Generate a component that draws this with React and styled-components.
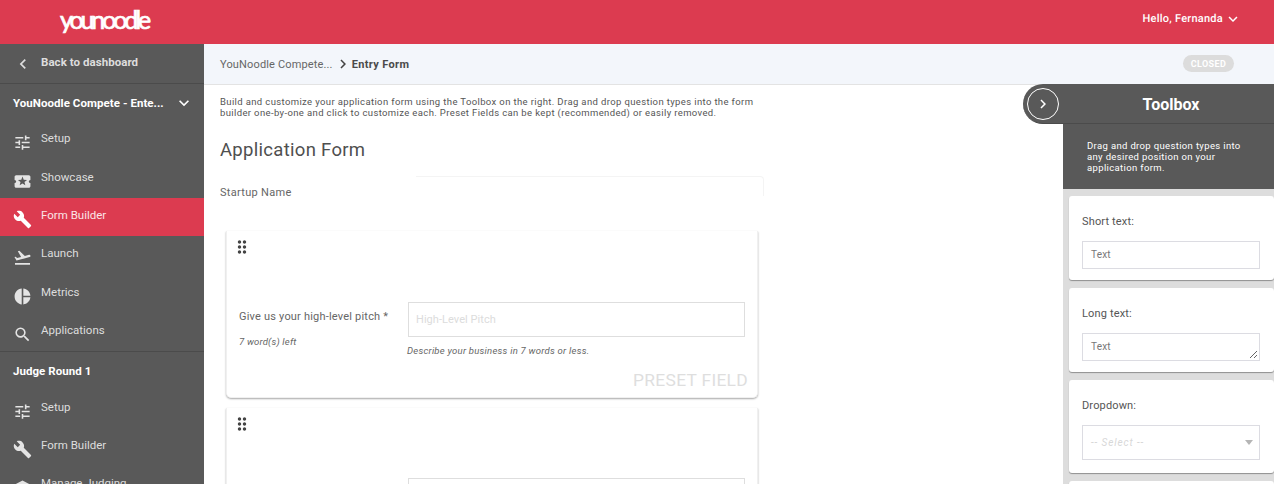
import React from "react";
import styled, { createGlobalStyle } from "styled-components";
import {
  MdBuild,
  MdChevronLeft,
  MdChevronRight,
  MdDragIndicator,
  MdExpandMore,
  MdFlightTakeoff,
  MdLocalPlay,
  MdPieChart,
  MdSchool,
  MdSearch,
  MdTune,
} from "react-icons/md";

const GlobalStyle = createGlobalStyle`
  html, body {
    margin: 0;
    height: 484px;
    overflow: hidden;
    background: #fff;
    font-family: Roboto, "Liberation Sans", sans-serif;
    color: #555;
  }
  * { box-sizing: border-box; }
`;

const Page = styled.div`
  width: 1274px;
  height: 484px;
  display: flex;
  flex-direction: column;
  overflow: hidden;
`;

const Header = styled.header`
  height: 44px;
  flex: none;
  background: #dc3b50;
  display: flex;
  align-items: center;
  justify-content: space-between;
  padding: 0 32px 0 60px;
  color: #fff;
`;

const Logo = styled.div`
  font-family: Lato, sans-serif;
  font-size: 25px;
  font-weight: 400;
  letter-spacing: -3.1px;
  line-height: 30px;
  margin-top: -7px;
  -webkit-text-stroke: 0.7px #fff;
`;

const Account = styled.div`
  display: flex;
  align-items: center;
  gap: 1px;
  margin-top: -7px;
  font-size: 11px;
  font-weight: 500;
  letter-spacing: 0.25px;
  text-rendering: geometricPrecision;
  svg { font-size: 18px; }
`;

const Body = styled.div`
  flex: 1;
  display: flex;
  min-height: 0;
`;

const Sidebar = styled.nav`
  width: 204px;
  flex: none;
  background: #595959;
  color: #ddd;
  overflow: hidden;
`;

const BackRow = styled.div`
  height: 40px;
  display: flex;
  align-items: center;
  padding: 0 0 3px 13px;
  border-bottom: 1px solid #4b4b4b;
  font-size: 11.5px;
  font-weight: 700;
  letter-spacing: 0.05px;
  svg { font-size: 20px; margin-right: 8px; margin-top: 3px; }
`;

const SectionRow = styled.div`
  height: 37px;
  display: flex;
  align-items: center;
  justify-content: space-between;
  padding: 0 10px 0 13px;
  color: #fff;
  font-size: 11.5px;
  font-weight: 700;
  letter-spacing: 0.05px;
  white-space: nowrap;
  svg { font-size: 20px; }
`;

const NavGroup = styled.div`
  border-bottom: ${(p) => (p.$divided ? "1px solid #4b4b4b" : "none")};
`;

const NavRow = styled.div`
  height: 38.4px;
  display: flex;
  align-items: center;
  padding-left: 13px;
  font-size: 11.5px;
  background: ${(p) => (p.$active ? "#dc3b50" : "transparent")};
  color: ${(p) => (p.$active ? "#fbe4e7" : "#ddd")};
  svg {
    font-size: 19px;
    width: 19px;
    margin-right: 9px;
    margin-top: 5px;
    color: ${(p) => (p.$active ? "#fff" : "#e4e4e4")};
    flex: none;
  }
  span { margin-top: -4px; }
`;

const Main = styled.main`
  flex: 1;
  min-width: 0;
  display: flex;
  flex-direction: column;
`;

const Breadcrumb = styled.div`
  height: 41px;
  flex: none;
  background: #f3f6fb;
  border-bottom: 1px solid #e3e3e3;
  display: flex;
  align-items: center;
  padding: 0 40px 0 16px;
  font-size: 11px;
  letter-spacing: 0.15px;
  color: #666;
  svg { font-size: 18px; color: #444; margin-left: 1px; }
`;

const Crumb = styled.b`
  font-weight: 700;
  color: #4a4a4a;
  letter-spacing: 0.35px;
`;

const Status = styled.span`
  margin-left: auto;
  margin-top: -1px;
  width: 51px;
  height: 17px;
  border-radius: 9px;
  background: #dcdcdc;
  color: #fff;
  font-size: 9px;
  font-weight: 700;
  letter-spacing: 0.4px;
  display: flex;
  align-items: center;
  justify-content: center;
`;

const Workspace = styled.div`
  flex: 1;
  min-height: 0;
  display: flex;
`;

const FormArea = styled.section`
  flex: 1;
  min-width: 0;
  padding: 11px 0 0 16px;
  overflow: hidden;
`;

const Intro = styled.p`
  width: 540px;
  margin: 0;
  font-size: 9.5px;
  line-height: 11px;
  letter-spacing: 0.37px;
  color: #555;
`;

const Title = styled.h1`
  margin: 19px 0 0;
  font-size: 18.5px;
  line-height: 26px;
  font-weight: 400;
  letter-spacing: 0.3px;
  color: #4f4f4f;
`;

const StartupRow = styled.div`
  display: flex;
  width: 544px;
  height: 55px;
  margin-top: 13px;
`;

const StartupLabel = styled.label`
  width: 196px;
  flex: none;
  padding-top: 10px;
  font-size: 11px;
  letter-spacing: 0.3px;
  color: #666;
`;

const StartupField = styled.div`
  flex: 1;
  height: 20px;
  border-top: 1px solid #f4f4f4;
  border-right: 1px solid #f4f4f4;
  border-radius: 0 4px 0 0;
`;

const FieldCard = styled.article`
  width: 532px;
  margin-left: 6px;
  height: ${(p) => (p.$height ? `${p.$height}px` : "auto")};
  margin-bottom: 10px;
  padding: 6px 12px 0 12px;
  background: #fff;
  border: 1px solid #f0f0f0;
  border-top: none;
  border-radius: 0 0 5px 5px;
  box-shadow: 0 1px 2px rgba(0, 0, 0, 0.35);
`;

const Handle = styled.div`
  height: 20px;
  margin-left: -7px;
  color: #444;
  svg { font-size: 20px; display: block; }
`;

const FieldRow = styled.div`
  display: flex;
  margin-top: ${(p) => p.$gap}px;
`;

const FieldLabel = styled.div`
  width: 169px;
  flex: none;
  padding-top: 8px;
  font-size: 11px;
  letter-spacing: 0.2px;
  color: #666;
`;

const WordsLeft = styled.div`
  margin-top: 13px;
  font-size: 9.5px;
  font-style: italic;
  letter-spacing: 0.2px;
  color: #666;
`;

const FieldControl = styled.div`
  flex: 1;
`;

const PitchInput = styled.div`
  height: 35px;
  border: 1px solid #dedede;
  display: flex;
  align-items: center;
  padding-left: 7px;
  font-size: 11px;
  letter-spacing: 0.05px;
  color: #dcdcdc;
`;

const Hint = styled.div`
  margin-top: 8px;
  margin-left: -1px;
  font-size: 9.5px;
  font-style: italic;
  letter-spacing: 0.25px;
  color: #666;
`;

const Preset = styled.div`
  margin-top: 14px;
  margin-right: -3px;
  text-align: right;
  font-size: 17.4px;
  line-height: 20px;
  letter-spacing: 0.3px;
  color: #dedede;
`;

const Toolbox = styled.aside`
  width: 211px;
  flex: none;
  display: flex;
  flex-direction: column;
  margin-top: -1px;
`;

const ToolboxHeader = styled.div`
  height: 40px;
  flex: none;
  margin-left: -40px;
  padding-left: 4px;
  border-radius: 20px 0 0 20px;
  border-bottom: 1px solid #4b4b4b;
  background: #595959;
  color: #fff;
  display: flex;
  align-items: center;
`;

const ToggleButton = styled.div`
  width: 32px;
  height: 32px;
  flex: none;
  border: 1px solid #fff;
  border-radius: 50%;
  display: flex;
  align-items: center;
  justify-content: center;
  svg { font-size: 18px; }
`;

const ToolboxTitle = styled.h2`
  flex: 1;
  margin: 0;
  padding: 1px 0 0 9px;
  text-align: center;
  font-size: 16px;
  font-weight: 700;
`;

const ToolboxIntro = styled.p`
  height: 65px;
  flex: none;
  margin: 0;
  padding: 16px 24px 0;
  background: #595959;
  color: #fff;
  font-size: 9.5px;
  line-height: 11px;
  letter-spacing: 0.35px;
`;

const ToolList = styled.div`
  flex: 1;
  background: #dddddd;
  padding: 7px 0 0 6px;
  display: flex;
  flex-direction: column;
  gap: 8px;
  overflow: hidden;
`;

const ToolCard = styled.div`
  flex: none;
  min-height: ${(p) => p.$height}px;
  padding: 19px 14px 0 13px;
  background: #fff;
  border-radius: 3px;
  box-shadow: 0 1px 1px rgba(0, 0, 0, 0.35);
`;

const ToolLabel = styled.div`
  font-size: 11px;
  line-height: 14px;
  letter-spacing: 0.15px;
  color: #555;
`;

const ToolInput = styled.div`
  position: relative;
  height: ${(p) => p.$height}px;
  margin-top: 12px;
  border: 1px solid #dcdce2;
  display: flex;
  align-items: center;
  padding: 0 0 1px 8px;
  font-size: 10px;
  letter-spacing: ${(p) => (p.$muted ? "0.9px" : "0.2px")};
  color: ${(p) => (p.$muted ? "#d8d8d8" : "#777")};
  font-style: ${(p) => (p.$muted ? "italic" : "normal")};
`;

const Grip = styled.svg`
  position: absolute;
  right: 1px;
  bottom: 1px;
`;

const Caret = styled.span`
  position: absolute;
  right: 6px;
  top: 14px;
  border-left: 4px solid transparent;
  border-right: 4px solid transparent;
  border-top: 5px solid #b5b5b5;
`;

const mainNav = [
  { label: "Setup", Icon: MdTune },
  { label: "Showcase", Icon: MdLocalPlay },
  { label: "Form Builder", Icon: MdBuild, active: true },
  { label: "Launch", Icon: MdFlightTakeoff },
  { label: "Metrics", Icon: MdPieChart },
  { label: "Applications", Icon: MdSearch },
];

const judgeNav = [
  { label: "Setup", Icon: MdTune },
  { label: "Form Builder", Icon: MdBuild },
  { label: "Manage Judging", Icon: MdSchool },
];

function NavItems({ items }) {
  return items.map(({ label, Icon, active }) => (
    <NavRow key={label} $active={active}>
      <Icon />
      <span>{label}</span>
    </NavRow>
  ));
}

export default function App() {
  return (
    <Page>
      <GlobalStyle />
      <Header>
        <Logo>younoodle</Logo>
        <Account>
          Hello, Fernanda <MdExpandMore />
        </Account>
      </Header>
      <Body>
        <Sidebar>
          <BackRow>
            <MdChevronLeft />
            Back to dashboard
          </BackRow>
          <NavGroup $divided>
            <SectionRow>
              YouNoodle Compete - Ente...
              <MdExpandMore />
            </SectionRow>
            <NavItems items={mainNav} />
          </NavGroup>
          <NavGroup>
            <SectionRow>Judge Round 1</SectionRow>
            <NavItems items={judgeNav} />
          </NavGroup>
        </Sidebar>
        <Main>
          <Breadcrumb>
            YouNoodle Compete...
            <MdChevronRight />
            <Crumb>Entry Form</Crumb>
            <Status>CLOSED</Status>
          </Breadcrumb>
          <Workspace>
            <FormArea>
              <Intro>
                Build and customize your application form using the Toolbox on the right. Drag and drop question types into the form builder one-by-one and click to customize each. Preset Fields can be kept (recommended) or easily removed.
              </Intro>
              <Title>Application Form</Title>
              <StartupRow>
                <StartupLabel>Startup Name</StartupLabel>
                <StartupField />
              </StartupRow>
              <FieldCard $height={167}>
                <Handle>
                  <MdDragIndicator />
                </Handle>
                <FieldRow $gap={45}>
                  <FieldLabel>
                    Give us your high-level pitch *
                    <WordsLeft>7 word(s) left</WordsLeft>
                  </FieldLabel>
                  <FieldControl>
                    <PitchInput>High-Level Pitch</PitchInput>
                    <Hint>Describe your business in 7 words or less.</Hint>
                  </FieldControl>
                </FieldRow>
                <Preset>PRESET FIELD</Preset>
              </FieldCard>
              <FieldCard>
                <Handle>
                  <MdDragIndicator />
                </Handle>
                <FieldRow $gap={44}>
                  <FieldLabel />
                  <FieldControl>
                    <PitchInput />
                  </FieldControl>
                </FieldRow>
              </FieldCard>
            </FormArea>
            <Toolbox>
              <ToolboxHeader>
                <ToggleButton>
                  <MdChevronRight />
                </ToggleButton>
                <ToolboxTitle>Toolbox</ToolboxTitle>
              </ToolboxHeader>
              <ToolboxIntro>
                Drag and drop question types into any desired position on your application form.
              </ToolboxIntro>
              <ToolList>
                <ToolCard $height={84}>
                  <ToolLabel>Short text:</ToolLabel>
                  <ToolInput $height={28}>Text</ToolInput>
                </ToolCard>
                <ToolCard $height={84}>
                  <ToolLabel>Long text:</ToolLabel>
                  <ToolInput $height={28}>
                    Text
                    <Grip width="9" height="9" viewBox="0 0 9 9">
                      <path d="M1 8 8 1M5 8 8 5" stroke="#666" strokeWidth="1" fill="none" />
                    </Grip>
                  </ToolInput>
                </ToolCard>
                <ToolCard $height={93}>
                  <ToolLabel>Dropdown:</ToolLabel>
                  <ToolInput $height={35} $muted>
                    -- Select --
                    <Caret />
                  </ToolInput>
                </ToolCard>
                <ToolCard $height={40} />
              </ToolList>
            </Toolbox>
          </Workspace>
        </Main>
      </Body>
    </Page>
  );
}
